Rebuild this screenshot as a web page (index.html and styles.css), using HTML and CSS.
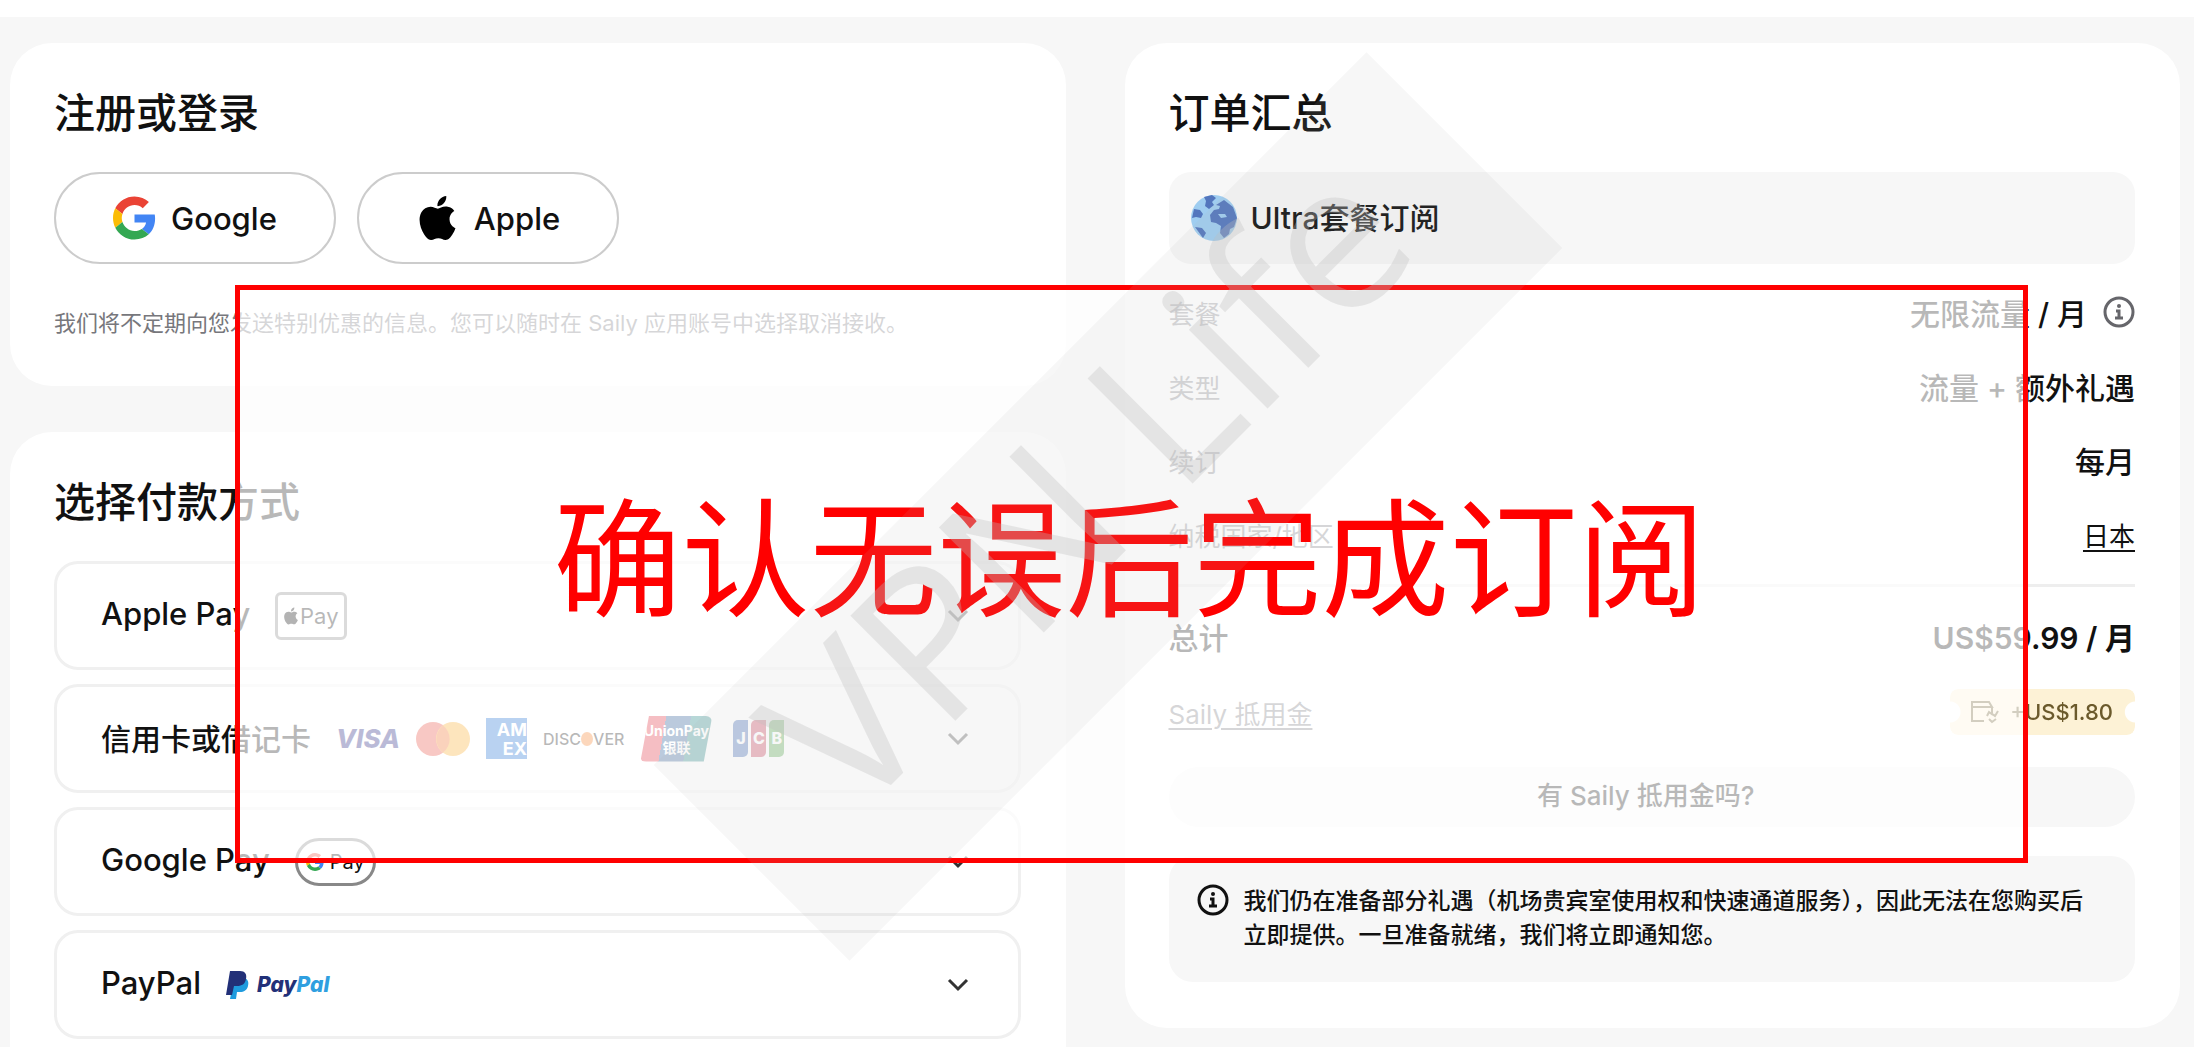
FILE: index.html
```html
<!DOCTYPE html>
<html lang="zh-CN">
<head>
<meta charset="utf-8">
<meta name="viewport" content="width=device-width, initial-scale=1">
<title>Saily 结账</title>
<link rel="stylesheet" href="styles.css">
</head>
<body>
<svg class="defs" aria-hidden="true">
  <symbol id="google" viewBox="0 0 48 48">
    <path fill="#EA4335" d="M24 9.5c3.54 0 6.71 1.22 9.21 3.6l6.85-6.85C35.9 2.38 30.47 0 24 0 14.62 0 6.51 5.38 2.56 13.22l7.98 6.19C12.43 13.72 17.74 9.5 24 9.5z"/>
    <path fill="#4285F4" d="M46.98 24.55c0-1.57-.15-3.09-.38-4.55H24v9.02h12.94c-.58 2.96-2.26 5.48-4.78 7.18l7.73 6c4.51-4.18 7.09-10.36 7.09-17.65z"/>
    <path fill="#FBBC05" d="M10.53 28.59c-.48-1.45-.76-2.99-.76-4.59s.27-3.14.76-4.59l-7.98-6.19C.92 16.46 0 20.12 0 24s.92 7.54 2.56 10.78l7.97-6.19z"/>
    <path fill="#34A853" d="M24 48c6.48 0 11.93-2.13 15.89-5.81l-7.73-6c-2.15 1.45-4.92 2.3-8.16 2.3-6.26 0-11.57-4.22-13.47-9.91l-7.98 6.19C6.51 42.62 14.62 48 24 48z"/>
  </symbol>
  <symbol id="apple" viewBox="2 0 20 24">
    <path d="M12.15 6.9c-.95 0-2.42-1.08-3.96-1.04-2.04.03-3.91 1.18-4.96 3.01-2.12 3.68-.55 9.1 1.52 12.09 1.01 1.45 2.21 3.09 3.79 3.04 1.52-.07 2.09-.99 3.94-.99 1.83 0 2.35.99 3.96.95 1.64-.03 2.68-1.48 3.68-2.95 1.16-1.69 1.64-3.33 1.66-3.42-.04-.01-3.18-1.22-3.22-4.86-.03-3.04 2.48-4.49 2.6-4.56-1.43-2.09-3.62-2.32-4.39-2.38-2-.16-3.68 1.09-4.62 1.11zM15.53 3.83c.84-1.01 1.4-2.43 1.24-3.83-1.2.05-2.66.8-3.53 1.81-.78.9-1.45 2.34-1.27 3.71 1.34.1 2.72-.69 3.56-1.69"/>
  </symbol>
  <symbol id="chevron" viewBox="0 0 24 24">
    <path d="M3 7l9 9 9-9" fill="none" stroke="#333" stroke-width="3"/>
  </symbol>
  <symbol id="info" viewBox="0 0 32 32">
    <circle cx="16" cy="16" r="14" fill="none" stroke="currentColor" stroke-width="3"/>
    <circle cx="16" cy="10" r="2" fill="currentColor"/>
    <path d="M13 15h3v7M12 22h8" fill="none" stroke="currentColor" stroke-width="3"/>
  </symbol>
</svg>

<div class="page">
  <main class="checkout">
    <div class="column">
      <section class="card">
        <h2>注册或登录</h2>
        <div class="logins">
          <button class="login" type="button"><svg class="login-icon"><use href="#google"/></svg>Google</button>
          <button class="login" type="button"><svg class="login-icon"><use href="#apple"/></svg>Apple</button>
        </div>
        <p class="note">我们将不定期向您发送特别优惠的信息。您可以随时在 Saily 应用账号中选择取消接收。</p>
      </section>

      <section class="card card-payment">
        <h2>选择付款方式</h2>
        <div class="methods">
          <button class="method" type="button">
            <span class="name latin">Apple Pay</span>
            <span class="mark mark-apple"><svg class="mark-icon"><use href="#apple"/></svg>Pay</span>
            <svg class="chevron"><use href="#chevron"/></svg>
          </button>
          <button class="method" type="button">
            <span class="name">信用卡或借记卡</span>
            <span class="brands">
              <span class="visa">VISA</span>
              <svg width="54" height="34" viewBox="0 0 54 34"><circle cx="17" cy="17" r="17" fill="#e8483a"/><circle cx="37" cy="17" r="17" fill="#f7a823"/><path d="M27 3.5a17 17 0 0 1 0 27 17 17 0 0 1 0-27z" fill="#ef6a1f"/></svg>
              <span class="amex"><span>AM</span><span>EX</span></span>
              <span class="discover">DISC<i></i>VER</span>
              <span class="union"><span>UnionPay</span><span>银联</span></span>
              <span class="jcb"><span>J</span><span>C</span><span>B</span></span>
            </span>
            <svg class="chevron"><use href="#chevron"/></svg>
          </button>
          <button class="method" type="button">
            <span class="name latin">Google Pay</span>
            <span class="mark mark-google"><svg class="mark-icon"><use href="#google"/></svg>Pay</span>
            <svg class="chevron"><use href="#chevron"/></svg>
          </button>
          <button class="method" type="button">
            <span class="name latin">PayPal</span>
            <span class="paypal">
              <svg width="23" height="28" viewBox="0 0 23 28"><path d="M8 7h10c4 1 5 4 4 8-1 4-4 6-8 6h-3l-1 7H4z" fill="#1f9bde"/><path d="M4 0h10c5 0 7 3 6 8-1 5-4 7-9 7H8l-2 9H0z" fill="#223078"/></svg>
              <span>Pay<b>Pal</b></span>
            </span>
            <svg class="chevron"><use href="#chevron"/></svg>
          </button>
        </div>
      </section>
    </div>

    <section class="card card-summary">
      <h2>订单汇总</h2>
      <div class="plan">
        <svg width="46" height="46" viewBox="0 0 46 46"><circle cx="23" cy="23" r="23" fill="#9fcdf0"/><path d="M13 2l8-2 4 3-4 4 2 3-5 4-4-3 1-5zM3 14l6 1 3 4-2 4-5-1-4 1zM4 32l7 1 4 5-3 5zM25 10l8-5 9 7 4 11-3 9-4 2-1 5-5 4-4-5 1-7-5-3-5-1-1-7 4-5 5-1 1-3z" fill="#5376bd"/><path d="M27 19l7 0 2 3-6 1z" fill="#9fcdf0"/></svg>
        <span class="name">Ultra套餐订阅</span>
      </div>
      <dl class="rows">
        <div class="row"><dt>套餐</dt><dd>无限流量 / 月<svg class="row-info"><use href="#info"/></svg></dd></div>
        <div class="row"><dt>类型</dt><dd>流量 + 额外礼遇</dd></div>
        <div class="row"><dt>续订</dt><dd>每月</dd></div>
        <div class="row"><dt>纳税国家/地区</dt><dd><a class="region" href="#region">日本</a></dd></div>
      </dl>
      <dl class="rows rows-total">
        <div class="row total"><dt>总计</dt><dd>US$59.99 / 月</dd></div>
        <div class="row"><dt><a class="credits" href="#credits">Saily 抵用金</a></dt>
          <dd class="coupon"><svg width="30" height="24" viewBox="0 0 30 24"><path d="M14 21H2V2h17l3 5H2M22 7v6M17 16l2-4 4 3M28 11l-3 5-4-3M19 19l3 3 4-3" fill="none" stroke="#6b5a2c" stroke-width="2"/></svg>+US$1.80</dd></div>
      </dl>
      <button class="redeem" type="button">有 Saily 抵用金吗?</button>
      <div class="notice">
        <svg class="notice-icon"><use href="#info"/></svg>
        <p>我们仍在准备部分礼遇（机场贵宾室使用权和快速通道服务），因此无法在您购买后立即提供。一旦准备就绪，我们将立即通知您。</p>
      </div>
    </section>
  </main>

  <div class="callout">确认无误后完成订阅</div>
  <div class="watermark">VPN Life</div>
</div>
</body>
</html>
```

FILE: styles.css
```css
* { box-sizing: border-box; }

body {
  margin: 0;
  background: #fff;
  color: #111;
  font-family: Inter, "Noto Sans CJK SC", sans-serif;
  font-size: 30px;
}

h2, p, dl, dd { margin: 0; }
button { font: inherit; color: inherit; cursor: pointer; }
a { color: inherit; text-underline-offset: 4px; text-decoration-thickness: 2px; }
svg { flex: none; }
.defs { display: none; }

.page { position: relative; padding: 17px 0 6px; overflow: hidden; }

.checkout {
  display: grid;
  grid-template-columns: 1fr 1fr;
  gap: 59px;
  align-items: start;
  padding: 26px 14px 0 10px;
  background: #f7f7f7;
}

.column { display: grid; gap: 46px; }

.card { padding: 42px 45px 44px 44px; background: #fff; border-radius: 42px; }
.card-payment { padding-bottom: 8px; border-radius: 42px 42px 0 0; }
.card h2 { margin-bottom: 31px; font-size: 41px; line-height: 56px; font-weight: 500; }

.name { padding-bottom: 4px; }
.latin { font-size: 31px; }

.logins { display: flex; gap: 21px; }
.login {
  display: flex;
  align-items: center;
  gap: 15px;
  height: 92px;
  padding: 0 57px;
  background: #fff;
  border: 2px solid #ccc;
  border-radius: 46px;
  font-size: 31px;
  font-weight: 500;
}
.login-icon { width: 43px; height: 44px; }
.note { margin-top: 42px; padding-bottom: 2px; color: #77777c; font-size: 22px; line-height: 34px; }

.methods { display: grid; gap: 14px; }
.method {
  display: flex;
  align-items: center;
  gap: 25px;
  height: 109px;
  padding: 0 48px 0 44px;
  background: #fff;
  border: 3px solid #f0f0f0;
  border-radius: 24px;
  font-weight: 500;
}
.chevron { width: 24px; height: 24px; margin-left: auto; }

.mark { display: flex; align-items: center; justify-content: center; height: 48px; font-size: 22px; font-weight: 400; }
.mark-apple { width: 72px; gap: 2px; border: 3px solid #888; border-radius: 6px; }
.mark-apple .mark-icon { width: 14px; height: 18px; }
.mark-google { width: 81px; gap: 6px; border: 3px solid #888; border-radius: 24px; font-size: 20px; }
.mark-google .mark-icon { width: 18px; height: 18px; }

.brands { display: flex; align-items: center; gap: 16px; }
.visa { color: #1a1a78; font-size: 26px; font-style: italic; font-weight: 800; }
.amex {
  display: grid;
  justify-items: end;
  width: 41px;
  height: 41px;
  padding-top: 3px;
  background: #1568cf;
  color: #fff;
  font-size: 18px;
  line-height: 17px;
  font-weight: 700;
}
.discover { display: flex; align-items: center; font-size: 16px; }
.discover i { width: 12px; height: 14px; border-radius: 50%; background: #f47b20; }
.union {
  display: grid;
  justify-items: center;
  align-content: center;
  width: 72px;
  height: 46px;
  border-radius: 6px;
  background: linear-gradient(100deg, #dd2536 33%, #1c4f8c 33% 64%, #107a78 64%);
  clip-path: polygon(12% 0, 100% 0, 88% 100%, 0 100%);
  color: #fff;
  font-size: 14px;
  line-height: 17px;
  font-weight: 700;
}
.jcb { display: flex; gap: 3px; padding-left: 5px; color: #fff; font-size: 16px; line-height: 37px; font-weight: 800; }
.jcb span { width: 15px; background: #1c4fa3; border-radius: 5px 0; }
.jcb span + span { background: #c0203c; }
.jcb span:last-child { background: #3c9b35; }

.paypal { display: flex; align-items: center; gap: 8px; color: #223078; font-size: 21px; font-style: italic; font-weight: 800; }
.paypal b { color: #2f9fe0; font-weight: 800; }

.card-summary { padding-bottom: 46px; }
.plan {
  display: flex;
  align-items: center;
  gap: 14px;
  height: 92px;
  padding: 0 22px;
  background: #f7f7f7;
  border-radius: 22px;
  font-weight: 500;
}

.rows { padding: 11px 0 13px; }
.rows-total { padding: 12px 0 16px; border-top: 3px solid #eee; }
.row { display: flex; align-items: center; justify-content: space-between; height: 74px; }
.row dt { color: #77777c; font-size: 26px; }
.row dd { display: flex; align-items: center; font-weight: 500; }
.row-info { width: 32px; height: 32px; margin-left: 16px; color: #66666b; }
.total { margin-bottom: 2px; }
.total dt { color: #111; font-size: 30px; font-weight: 500; }
.total dd { font-weight: 600; }
.region { font-size: 26px; font-weight: 400; }
.row .coupon {
  gap: 10px;
  height: 46px;
  padding: 0 22px 0 20px;
  background: #fdf2d6;
  border-radius: 8px;
  color: #6b5a2c;
  font-size: 22px;
  -webkit-mask: radial-gradient(circle 11px at 0 50%, #0000 10px, #000 11px) left / 51% 100% no-repeat, radial-gradient(circle 11px at 100% 50%, #0000 10px, #000 11px) right / 51% 100% no-repeat;
}

.redeem {
  display: block;
  width: 100%;
  height: 60px;
  margin-top: 2px;
  padding: 0 12px 8px 0;
  background: #f7f7f7;
  border: 0;
  border-radius: 30px;
  font-size: 26px;
  font-weight: 500;
}

.notice {
  display: flex;
  gap: 15px;
  margin-top: 29px;
  padding: 28px 44px 30px 28px;
  background: #f7f7f7;
  border-radius: 24px;
  font-size: 23px;
  line-height: 34px;
  font-weight: 500;
}
.notice-icon { width: 32px; height: 32px; }

.callout {
  position: absolute;
  top: 285px;
  left: 235px;
  right: 166px;
  display: flex;
  align-items: center;
  justify-content: center;
  height: 578px;
  padding: 0 4px 46px 0;
  border: 5px solid #f00;
  background: rgba(255, 255, 255, 0.7);
  color: #f00;
  font-family: "Noto Sans CJK SC", sans-serif;
  font-size: 128px;
  font-weight: 400;
}

.watermark {
  position: absolute;
  top: 368px;
  left: 604px;
  width: 1008px;
  height: 277px;
  background: rgba(182, 182, 182, 0.11);
  color: rgba(191, 191, 191, 0.32);
  font-family: "Open Sans", "Noto Sans", sans-serif;
  font-size: 208px;
  line-height: 204px;
  text-align: center;
  white-space: nowrap;
  transform: rotate(-45deg);
}
```
